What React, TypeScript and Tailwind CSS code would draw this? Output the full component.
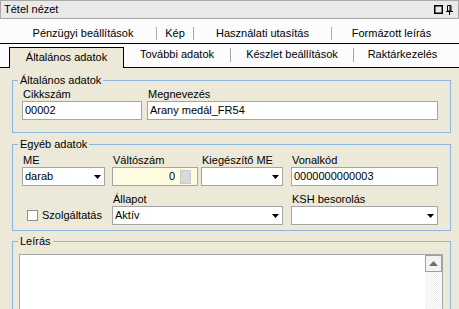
import React from 'react'

const Arrow = () => (
  <svg width="7" height="4" viewBox="0 0 7 4" className="shrink-0">
    <path d="M0 0H7L3.5 4Z" fill="#000" />
  </svg>
)

const Field = ({ label, children, className = '' }: any) => (
  <div className={`flex flex-col ${className}`}>
    <div className="h-[13px] whitespace-nowrap pl-px leading-[13px]">{label}</div>
    {children}
  </div>
)

const TextBox = ({ value, className = '' }: any) => (
  <div className={`flex h-[19px] items-center border border-[#a5a5a5] bg-white pl-[2px] leading-[13px] ${className}`}>
    {value}
  </div>
)

const Select = ({ value, className = '' }: any) => (
  <div className={`flex h-[19px] items-center justify-between border border-[#a5a5a5] bg-white pl-[2px] pr-[3px] leading-[13px] ${className}`}>
    <span>{value}</span>
    <Arrow />
  </div>
)

const Group = ({ title, className = '', children }: any) => (
  <fieldset className={`border border-[#8db7e0] ${className}`}>
    <legend className="ml-[5px] px-[2px] leading-[12px]">{title}</legend>
    {children}
  </fieldset>
)

const Sep = ({ h = 'h-[13px]' }: any) => <div className={`w-px shrink-0 bg-[#a9a9a9] ${h}`} />

export default function App() {
  return (
    <div className="flex h-[309px] w-[459px] flex-col overflow-hidden bg-[#ece9d8] font-['Liberation_Sans',Arial,sans-serif] text-[11px] text-black">
      {/* title bar */}
      <div className="flex h-[19px] shrink-0 items-center justify-between border border-[#a8a8a8] bg-[#e9e9e9] pl-[3px] pr-[5px]">
        <span className="leading-[13px]">Tétel nézet</span>
        <div className="flex items-center gap-[3px]">
          <svg width="9" height="9" viewBox="0 0 9 9">
            <rect x="0.75" y="0.75" width="7.5" height="7.5" fill="none" stroke="#000" strokeWidth="1.5" />
          </svg>
          <svg width="7" height="10" viewBox="0 0 7 10">
            <path d="M1.5 0.5H5V6H1.5Z" fill="none" stroke="#000" />
            <path d="M4 1V6" stroke="#000" />
            <path d="M0 6.5H7" stroke="#000" />
            <path d="M3.5 6.5V10" stroke="#000" />
          </svg>
        </div>
      </div>

      {/* tab row 1 */}
      <div className="flex h-[25px] shrink-0 items-start border-b border-black bg-[#fcfcfc] pl-[10px] pt-[8px] leading-[13px]">
        <div className="w-[146px] text-center">Pénzügyi beállítások</div>
        <Sep />
        <div className="w-[36px] text-center">Kép</div>
        <Sep />
        <div className="w-[137px] text-center">Használati utasítás</div>
        <Sep />
        <div className="w-[119px] text-center">Formázott leírás</div>
      </div>

      {/* tab row 2 */}
      <div className="flex h-[24px] shrink-0 items-end border-b border-black bg-[#fcfcfc] pl-[9px] leading-[13px]">
        <div className="-mb-px h-[21px] w-[115px] border border-b-0 border-black bg-[#ece9d8] pt-[3px] text-center">
          Általános adatok
        </div>
        <div className="flex h-full items-center pb-[2px]">
          <div className="w-[106px] text-center">További adatok</div>
          <Sep h="h-[14px]" />
          <div className="w-[122px] text-center">Készlet beállítások</div>
          <Sep h="h-[14px]" />
          <div className="w-[97px] text-center">Raktárkezelés</div>
        </div>
      </div>

      {/* body */}
      <div className="flex flex-col pl-[12px] pr-[8px] pt-[6px]">
        <Group title="Általános adatok">
          <div className="flex gap-[5px] pb-[12px] pl-[9px] pr-[12px] pt-[2px]">
            <Field label="Cikkszám" className="w-[120px]">
              <TextBox value="00002" />
            </Field>
            <Field label="Megnevezés" className="flex-1">
              <TextBox value="Arany medál_FR54" />
            </Field>
          </div>
        </Group>

        <Group title="Egyéb adatok" className="mt-[5px]">
          <div className="grid grid-cols-[90px_89px_90px_1fr] gap-y-[7px] pb-[5px] pl-[9px] pr-[12px] pt-[4px]">
            <Field label="ME">
              <Select value="darab" className="w-[83px]" />
            </Field>
            <Field label="Váltószám">
              <div className="flex h-[19px] w-[86px] items-center justify-end border border-[#a5a5a5] bg-[#fdfce1] pr-[6px] leading-[13px]">
                <span>0</span>
                <div className="ml-[5px] h-[14px] w-[11px] border border-[#cacaca] bg-[repeating-conic-gradient(#d0d0d0_0_25%,#e2e2e2_0_50%)] bg-[length:2px_2px]" />
              </div>
            </Field>
            <Field label="Kiegészítő ME">
              <Select value="" className="w-[82px]" />
            </Field>
            <Field label="Vonalkód">
              <TextBox value="0000000000003" />
            </Field>

            <Field label="">
              <div className="flex h-[19px] items-center gap-[4px] pl-[5px] leading-[13px]">
                <div className="h-[11px] w-[11px] border border-[#8f8f8f] bg-white" />
                <span>Szolgáltatás</span>
              </div>
            </Field>
            <Field label="Állapot" className="col-span-2">
              <Select value="Aktív" className="w-[171px]" />
            </Field>
            <Field label="KSH besorolás">
              <Select value="" />
            </Field>
          </div>
        </Group>

        <Group title="Leírás" className="mt-[4px]">
          <div className="pl-[6px] pr-[7px] pt-[7px]">
            <div className="flex h-[70px] justify-end border border-[#a5a5a5] bg-white">
              <div className="flex w-[17px] flex-col">
                <div className="flex h-[17px] items-center justify-center border border-[#a0a0a0] bg-[#f3f3f3]">
                  <svg width="9" height="5" viewBox="0 0 9 5">
                    <path d="M0 5L4.5 0L9 5Z" fill="#6f6f6f" />
                  </svg>
                </div>
                <div className="flex-1 bg-[repeating-conic-gradient(#eeeeee_0_25%,#ffffff_0_50%)] bg-[length:2px_2px]" />
              </div>
            </div>
          </div>
        </Group>
      </div>
    </div>
  )
}
